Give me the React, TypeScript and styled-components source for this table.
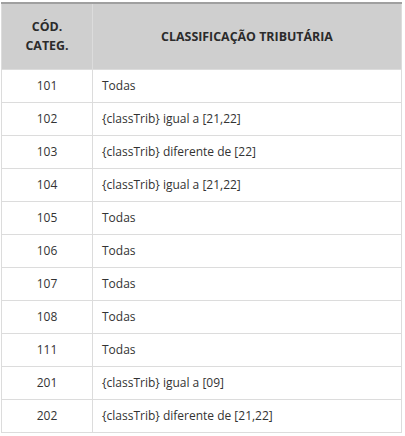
import React from "react";
import styled, { createGlobalStyle } from "styled-components";

const Global = createGlobalStyle`
  html, body { margin: 0; padding: 0; background: #fff; }
  body { font-family: "Open Sans", "Liberation Sans", sans-serif; }
`;

const Wrap = styled.div`
  padding: 2px 3px 0 1px;
`;

const Table = styled.table`
  width: 401px;
  border-collapse: collapse;
  font-size: 12px;
  color: #333;
  border-top: 2px solid #a0a0a0;
`;

const Th = styled.th<{ $w?: number }>`
  background: #cfcfcf;
  font-weight: 700;
  font-size: 12.4px;
  color: #2b2b2b;
  height: 66px;
  padding: 0 8px;
  box-sizing: border-box;
  line-height: 19px;
  text-align: center;
  border: 1px solid #dcdcdc;
  border-top: none;
  width: ${(p) => (p.$w ? `${p.$w}px` : "auto")};
`;

const Td = styled.td<{ $center?: boolean }>`
  height: 33px;
  box-sizing: border-box;
  padding: 1px 9px 0;
  border: 1px solid #dcdcdc;
  text-align: ${(p) => (p.$center ? "center" : "left")};
  line-height: 18px;
`;

const rows: [string, string][] = [
  ["101", "Todas"],
  ["102", "{classTrib} igual a [21,22]"],
  ["103", "{classTrib} diferente de [22]"],
  ["104", "{classTrib} igual a [21,22]"],
  ["105", "Todas"],
  ["106", "Todas"],
  ["107", "Todas"],
  ["108", "Todas"],
  ["111", "Todas"],
  ["201", "{classTrib} igual a [09]"],
  ["202", "{classTrib} diferente de [21,22]"],
];

export default function App() {
  return (
    <>
      <Global />
      <Wrap>
        <Table>
          <thead>
            <tr>
              <Th $w={91}>
                CÓD.
                <br />
                CATEG.
              </Th>
              <Th>CLASSIFICAÇÃO TRIBUTÁRIA</Th>
            </tr>
          </thead>
          <tbody>
            {rows.map(([c, t]) => (
              <tr key={c}>
                <Td $center>{c}</Td>
                <Td>{t}</Td>
              </tr>
            ))}
          </tbody>
        </Table>
      </Wrap>
    </>
  );
}
